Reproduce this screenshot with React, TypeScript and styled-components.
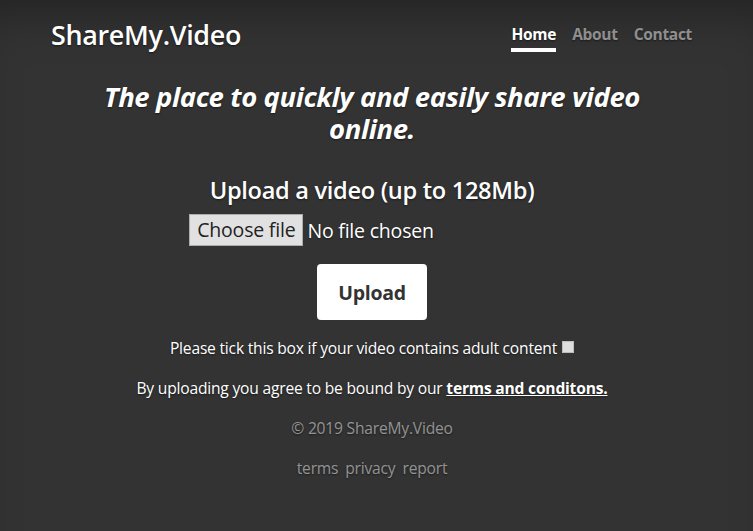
import React from 'react'
import styled, { createGlobalStyle } from 'styled-components'

const GlobalStyle = createGlobalStyle`
  html, body {
    margin: 0;
    padding: 0;
    background: #333333;
  }
  body {
    font-family: "Open Sans", "Noto Sans", sans-serif;
    color: #ffffff;
  }
`

const Cover = styled.div`
  min-height: 531px;
  background: #333333;
  box-shadow: inset 0 40px 50px -30px rgba(0, 0, 0, 0.35);
  text-shadow: 0 1px 2px rgba(0, 0, 0, 0.5);
`

const Container = styled.div`
  width: 644px;
  margin-left: 50px;
  display: flex;
  flex-direction: column;
`

const Masthead = styled.header`
  display: flex;
  justify-content: space-between;
  align-items: flex-start;
  padding-top: 17px;
`

const Brand = styled.h3`
  margin: 0 0 0 1px;
  font-size: 26.9px;
  font-weight: 600;
  line-height: 36px;
  letter-spacing: -0.3px;
`

const Nav = styled.nav`
  display: flex;
  gap: 16px;
  padding-top: 6px;
  margin-right: 2px;
`

interface NavLinkProps {
  active?: boolean
}

const NavLink = styled.a<NavLinkProps>`
  font-size: 15.5px;
  font-weight: 700;
  line-height: 22px;
  letter-spacing: -0.3px;
  padding-bottom: 3px;
  color: ${({ active }) => (active ? '#ffffff' : 'rgba(255, 255, 255, 0.5)')};
  border-bottom: 4px solid ${({ active }) => (active ? '#ffffff' : 'transparent')};
  text-decoration: none;
  cursor: pointer;
`

const Main = styled.main`
  display: flex;
  flex-direction: column;
  align-items: center;
  text-align: center;
`

const Lead = styled.h2`
  margin: 28px 0 0;
  width: 580px;
  font-size: 27.5px;
  font-style: italic;
  font-weight: 700;
  line-height: 32px;
  letter-spacing: -0.4px;
`

const UploadTitle = styled.h4`
  margin: 30px 0 0;
  font-size: 23.6px;
  font-weight: 600;
  line-height: 30px;
  letter-spacing: -0.3px;
`

const FileRow = styled.div`
  display: flex;
  align-items: center;
  gap: 4px;
  margin-top: 9px;
  margin-right: 121px;
  font-size: 19.5px;
  letter-spacing: -0.2px;
`

const FileButton = styled.span`
  display: inline-block;
  height: 32px;
  box-sizing: border-box;
  padding: 0 7px;
  line-height: 30px;
  background: #e1e1e1;
  border: 1px solid #adadad;
  color: #222222;
  text-shadow: none;
  font-weight: 400;
`

const FileStatus = styled.span`
  color: #ffffff;
`

const UploadButton = styled.button`
  margin-top: 18px;
  width: 110px;
  height: 56px;
  border: none;
  border-radius: 4px;
  background: #ffffff;
  color: #333333;
  font-family: "Open Sans", "Noto Sans", sans-serif;
  font-size: 19.5px;
  font-weight: 700;
  letter-spacing: -0.3px;
  cursor: pointer;
`

const TextBlock = styled.div`
  display: flex;
  flex-direction: column;
  gap: 16px;
  margin-top: 16px;
  align-items: center;
`

const Para = styled.p`
  margin: 0;
  font-size: 15.6px;
  line-height: 24px;
  letter-spacing: -0.2px;
`

const Tick = styled.span`
  display: inline-block;
  width: 12px;
  height: 12px;
  margin-left: 5px;
  vertical-align: 1px;
  background: #dedede;
  border: 1px solid #bdbdbd;
  box-sizing: border-box;
`

const TermsLink = styled.a`
  color: #ffffff;
  font-weight: 700;
  text-decoration: underline;
  cursor: pointer;
`

interface MutedProps {
  spaced?: boolean
}

const Muted = styled.p<MutedProps>`
  margin: 0;
  font-size: 15.6px;
  line-height: 24px;
  letter-spacing: -0.2px;
  color: rgba(255, 255, 255, 0.5);
  display: flex;
  gap: ${({ spaced }) => (spaced ? '7px' : '0')};
`

const FooterLink = styled.a`
  color: rgba(255, 255, 255, 0.5);
  text-decoration: none;
  cursor: pointer;
`

const App: React.FC = () => {
  return (
    <>
      <GlobalStyle />
      <Cover>
        <Container>
          <Masthead>
            <Brand>ShareMy.Video</Brand>
            <Nav>
              <NavLink active>Home</NavLink>
              <NavLink>About</NavLink>
              <NavLink>Contact</NavLink>
            </Nav>
          </Masthead>
          <Main>
            <Lead>The place to quickly and easily share video online.</Lead>
            <UploadTitle>Upload a video (up to 128Mb)</UploadTitle>
            <FileRow>
              <FileButton>Choose file</FileButton>
              <FileStatus>No file chosen</FileStatus>
            </FileRow>
            <UploadButton>Upload</UploadButton>
            <TextBlock>
              <Para>
                Please tick this box if your video contains adult content
                <Tick />
              </Para>
              <Para>
                By uploading you agree to be bound by our <TermsLink>terms and conditons.</TermsLink>
              </Para>
              <Muted>© 2019 ShareMy.Video</Muted>
              <Muted spaced>
                <FooterLink>terms</FooterLink>
                <FooterLink>privacy</FooterLink>
                <FooterLink>report</FooterLink>
              </Muted>
            </TextBlock>
          </Main>
        </Container>
      </Cover>
    </>
  )
}

export default App
